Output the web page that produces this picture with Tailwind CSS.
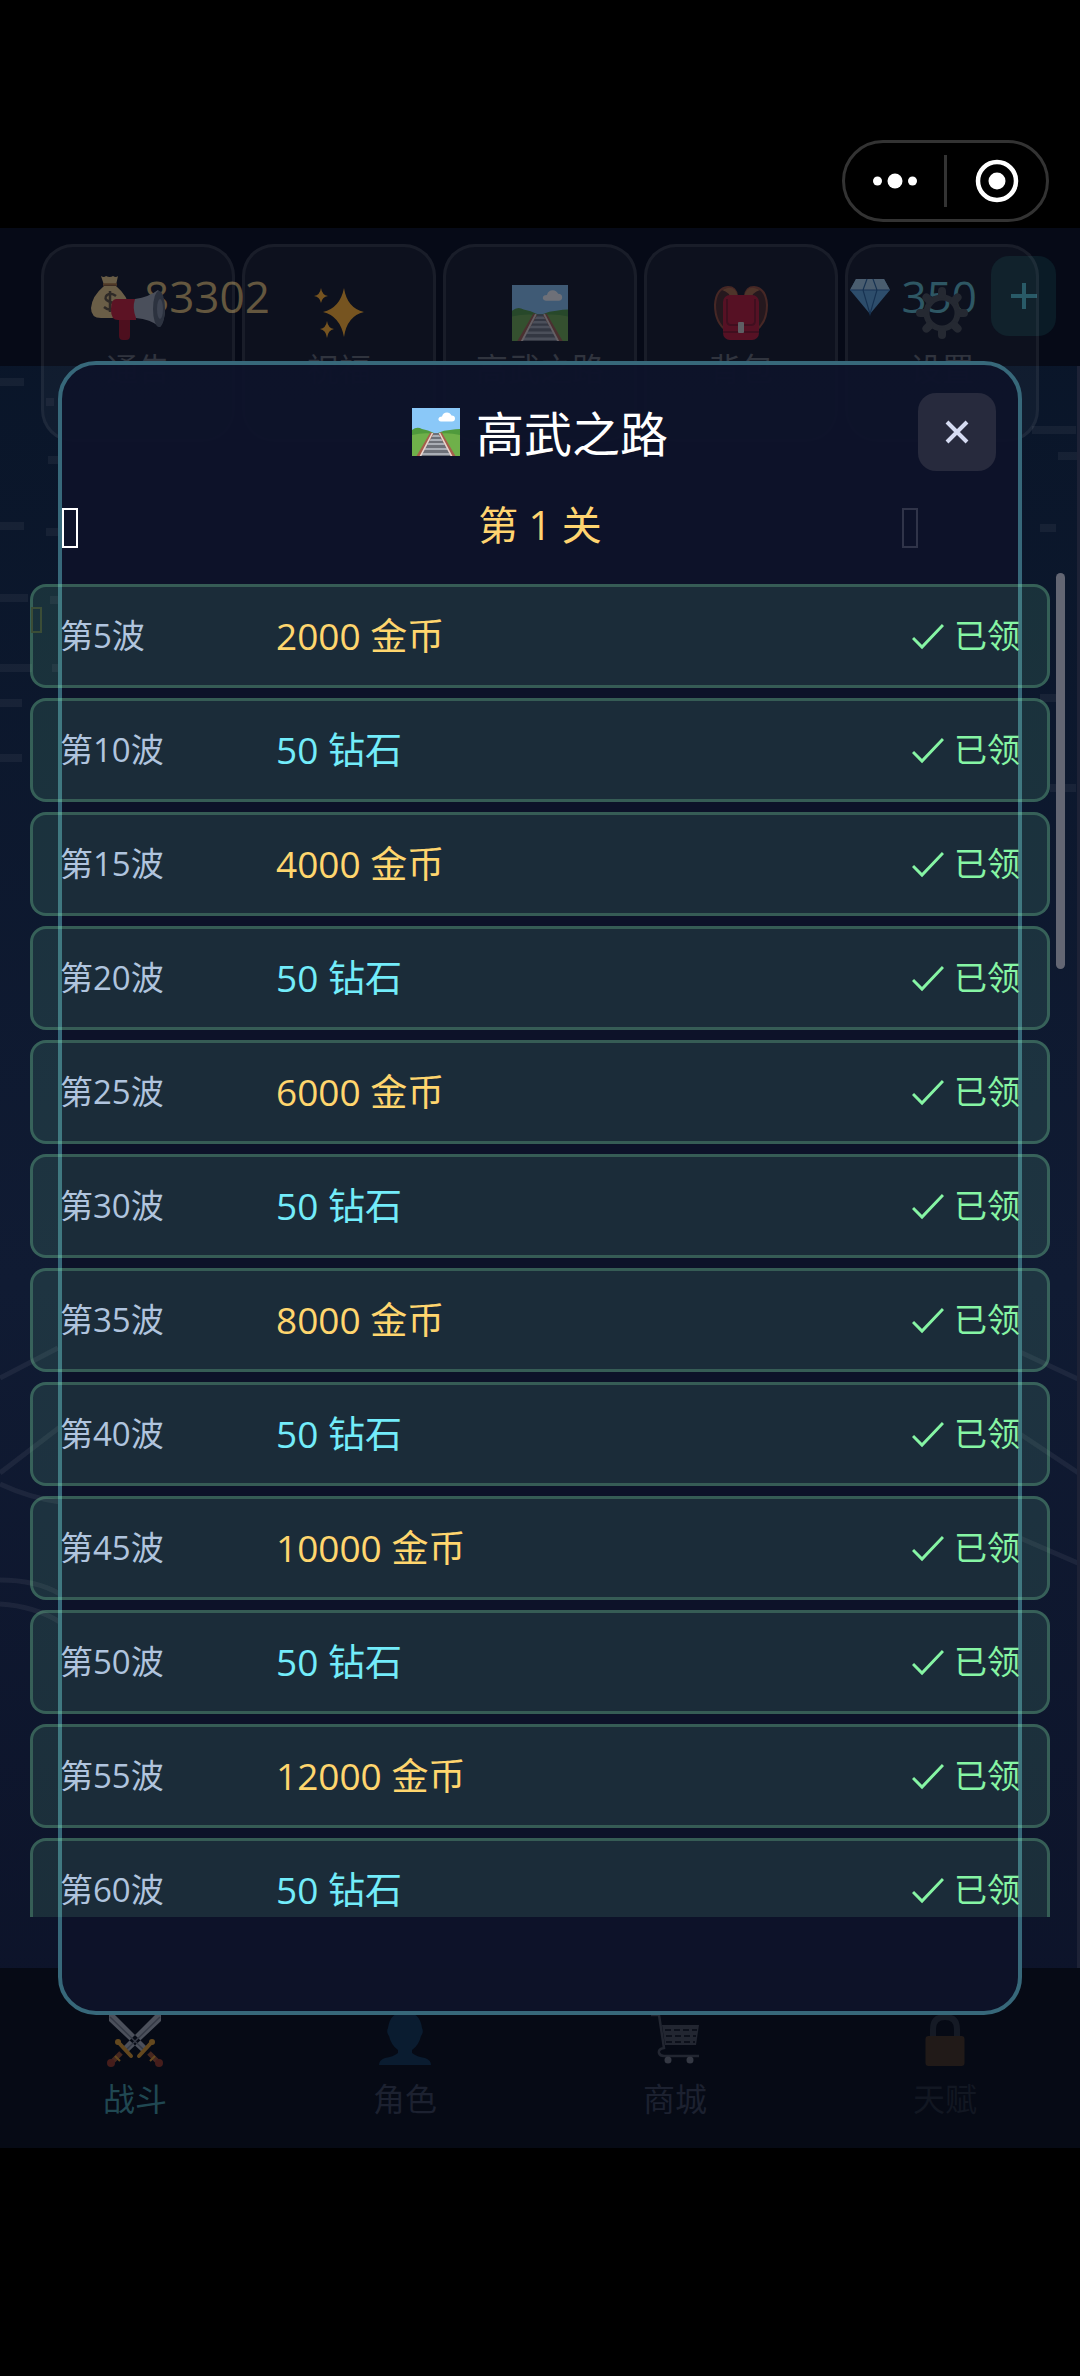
<!DOCTYPE html>
<html lang="zh-CN">
  <head>
    <meta charset="utf-8" />
    <meta name="viewport" content="width=device-width, initial-scale=1" />
    <title>高武之路</title>
    <script src="https://cdn.jsdelivr.net/npm/@tailwindcss/browser@4"></script>
  </head>
  <body class="min-h-screen bg-black font-['Open_Sans','Noto_Sans_CJK_SC',sans-serif]">
    <svg class="hidden">
      <symbol id="track" viewBox="0 0 48 48">
        <clipPath id="track-clip"><rect width="48" height="48" rx="5" /></clipPath>
        <g clip-path="url(#track-clip)">
          <rect width="48" height="48" fill="#8ac8f8" />
          <path d="M0 22q5-4 10-1q6 1 12 4h4q6-3 12-3q6-1 10-1v27H0z" fill="#4f9a3c" />
          <path d="M0 27q12-3 24-1q12-2 24 1v21H0z" fill="#6fb04a" />
          <path d="M19 25h10l14 23H5z" fill="#6d7078" />
          <path d="M18 28h12M17 32h14M15 36h18M12 41h24M9 46h30" stroke="#a9adb5" stroke-width="2.2" />
          <path d="M20 25L6 49M28 25l14 24" stroke="#a65f4b" stroke-width="3.5" />
          <path d="M20.500 25L8 49M27.500 25L40 49" stroke="#e6d6d0" stroke-width="1.600" />
          <path d="M29 13.500q-3-.5-2.500-3q.5-2 3.500-2q1-4 5-4q3 0 4.500 3q3.500 0 3.500 3q0 3-3 3z" fill="#fff" />
        </g>
      </symbol>
    </svg>

    <header class="flex h-[228px] items-end justify-end pr-[31px] pb-1.5">
      <div class="flex h-[82px] w-[207px] items-center rounded-full border-3 border-[#333]">
        <button class="flex flex-1 justify-center" aria-label="更多">
          <svg class="h-4 w-11" viewBox="0 0 44 16" fill="#fff">
            <circle cx="4.500" cy="8" r="4.500" /><circle cx="22" cy="8" r="7.500" /><circle cx="39.500" cy="8" r="4.500" />
          </svg>
        </button>
        <span class="h-[52px] w-[3px] bg-[#333]"></span>
        <button class="flex flex-1 justify-center" aria-label="关闭小程序">
          <svg class="size-11" viewBox="0 0 44 44">
            <circle cx="22" cy="22" r="19" fill="none" stroke="#fff" stroke-width="4.500" />
            <circle cx="22" cy="22" r="8.500" fill="#fff" />
          </svg>
        </button>
      </div>
    </header>

    <main class="relative isolate overflow-hidden bg-linear-to-b from-[#091528] via-[#101b33] via-55% to-[#0c1228] pt-[133px]">
      <!-- dimmed battle scene -->
      <svg class="absolute inset-0 -z-20 size-full" viewBox="0 0 1080 1920" preserveAspectRatio="none" fill="none" stroke="#fff">
        <path d="M0 154h24M46 174h8M48 232h10M0 298h24M46 304h20M0 370h28M50 372h12M0 440h32M52 440h10M0 475h22M0 530h22M1032 202h44M1058 228h20M1040 300h16M1040 470h20M1050 560h26" stroke-opacity=".05" stroke-width="8" />
        <path d="M0 1150l58-30M0 1245l60-46M0 1256q30 14 60 18M0 1352q36 0 60 14M0 1376q34 2 60 18M1020 1124l60 28M1020 1206l60 40M1020 1310l60 26" stroke-opacity=".06" stroke-width="5" />
      </svg>
      <span class="absolute inset-y-0 right-0 -z-20 w-[3px] bg-[#1d2236]"></span>

      <!-- resources and menu, under the dialog -->
      <div class="absolute inset-x-0 top-0 -z-10 h-[138px] bg-[#060a17]">
        <div class="flex items-center justify-between pt-7 pr-6 pl-[88px]">
          <div class="flex items-center gap-3 text-[44px] leading-[80px] text-[#5f5239]">
            <svg class="size-11 opacity-40" viewBox="0 0 44 44">
              <path d="M16 12Q4 22 3 34q0 10 10 10h19q10 0 9-10Q40 22 28 12z" fill="#f5cf82" />
              <path d="M13 2q3 2 5 0q4 2 7 0q3 2 5 0l-2 9H16z" fill="#f5cf82" />
              <path d="M15 10.500h14" stroke="#b0722f" stroke-width="2.500" />
              <path d="M28 22q-5-4-9-1q-4 4 2 6.500q8 2 5 6.500q-4 4-10-1M22 17v21" fill="none" stroke="#5c4b32" stroke-width="2.500" />
            </svg>
            <span>83302</span>
          </div>
          <div class="flex items-center text-[44px] leading-[80px] text-[#28525f]">
            <svg class="mr-3 size-10 opacity-40" viewBox="0 0 40 40">
              <path d="M6 3h28l6 11l-20 24L0 14z" fill="#5aa5e0" />
              <path d="M6 3h28l6 11H0z" fill="#a4cdea" />
              <path d="M0 14h40M13 14l7 24l7-24l-4-11M13 14l4-11" fill="none" stroke="#1e5f9c" stroke-width="1.200" />
            </svg>
            <span>350</span>
            <button class="ml-3.5 flex h-20 w-[65px] items-center justify-center rounded-[18px] bg-[#0a1b26]" aria-label="增加钻石">
              <svg class="size-7" viewBox="0 0 28 28"><path d="M14 1v26M1 14h26" stroke="#235563" stroke-width="4" /></svg>
            </button>
          </div>
        </div>
      </div>
      <nav class="absolute inset-x-0 top-4 -z-10 grid grid-cols-5 gap-[7px] px-[41px] text-[32px] leading-10 text-[#30343e]">
        <a href="#" class="flex h-[198px] flex-col items-center rounded-[32px] border-3 border-white/5 bg-white/3 pt-[38px]">
          <svg class="size-14" viewBox="0 0 56 56">
            <path d="M9 31h11v20q0 4-4 4h-3q-4 0-4-4z" fill="#4d0f1e" />
            <path d="M6 14h20v21H8q-7 0-7-10q0-11 5-11z" fill="#5c1324" />
            <path d="M25 14Q39 12 48 5q7 8 7 19t-5 18q-10-8-24-9q-4-10-1-19z" fill="#4a4f5b" />
            <ellipse cx="49" cy="24" rx="6" ry="18" fill="#2c323f" />
            <ellipse cx="50" cy="24" rx="3" ry="10" fill="#3d4351" />
          </svg>
          <span class="mt-2">通告</span>
        </a>
        <a href="#" class="flex h-[198px] flex-col items-center rounded-[32px] border-3 border-white/5 bg-white/3 pt-[38px]">
          <svg class="size-14 opacity-45" viewBox="0 0 56 56" fill="#f5a623">
            <path d="M33 3Q36 23 53 27Q36 31 33 52Q29 31 12 27Q29 23 33 3z" />
            <path d="M10 3q1 7 7 8q-6 1-7 7q-1-6-7-7q6-1 7-8zM16 36q1 7 7 8q-6 1-7 9q-1-8-7-9q6-1 7-8z" />
          </svg>
          <span class="mt-2">祝福</span>
        </a>
        <a href="#" class="flex h-[198px] flex-col items-center rounded-[32px] border-3 border-white/5 bg-white/3 pt-[38px]">
          <svg class="size-14 opacity-40"><use href="#track" /></svg>
          <span class="mt-2">高武之路</span>
        </a>
        <a href="#" class="flex h-[198px] flex-col items-center rounded-[32px] border-3 border-white/5 bg-white/3 pt-[38px]">
          <svg class="size-14 opacity-40" viewBox="0 0 56 56">
            <path d="M14 46Q2 38 2 20Q3 3 15 2q8 0 9 9M42 46q12-8 12-26Q53 3 41 2q-8 0-9 9" fill="#4a2420" stroke="#9c4a30" stroke-width="2" />
            <path d="M9 5q13-7 16 7l-7 3q-1-8-9-10zM47 5Q34-2 31 12l7 3q1-8 9-10z" fill="#b0683c" />
            <rect x="10" y="10" width="36" height="45" rx="7" fill="#c4122f" />
            <path d="M14 14v22q0 4 4 4h20q4 0 4-4V14M10 47h36" fill="none" stroke="#8d0d22" stroke-width="2" />
            <rect x="25" y="37" width="6" height="11" rx="1" fill="#d8d4cc" />
          </svg>
          <span class="mt-2">背包</span>
        </a>
        <a href="#" class="flex h-[198px] flex-col items-center rounded-[32px] border-3 border-white/5 bg-white/3 pt-[38px]">
          <svg class="size-14" viewBox="0 0 56 56" fill="none" stroke="#252932">
            <circle cx="28" cy="28" r="15.500" stroke-width="6" />
            <path stroke-width="8" stroke-linecap="round" d="M28 6v4M28 46v4M6 28h4M46 28h4M12.400 12.400l3 3M40.600 40.600l3 3M12.400 43.600l3-3M40.600 15.400l3-3" />
          </svg>
          <span class="mt-2">设置</span>
        </a>
      </nav>

      <section class="mx-[58px] rounded-[38px] border-4 border-[#37687a] bg-[#0d1329]/97 pt-7 pb-[94px]">
        <div class="relative flex h-[78px] items-center justify-center gap-4">
          <svg class="size-12"><use href="#track" /></svg>
          <h1 class="pt-1 text-[48px] leading-[72px] text-white">高武之路</h1>
          <button class="absolute right-[22px] flex size-[78px] items-center justify-center rounded-[18px] bg-[#272a3d]" aria-label="关闭">
            <svg class="size-6" viewBox="0 0 24 24"><path d="M2 2l20 20M22 2L2 22" stroke="#d5dbf2" stroke-width="4" /></svg>
          </button>
        </div>

        <div class="flex h-[113px] items-center justify-between pr-[100px]">
          <button class="h-10 w-4 border-2 border-white" aria-label="上一关"></button>
          <h2 class="pb-1.5 pl-[100px] text-[40px] leading-[60px] text-[#ffd470]">第 1 关</h2>
          <button class="h-10 w-4 border-2 border-[#303449]" aria-label="下一关"></button>
        </div>

        <div class="relative -mx-8">
          <span class="absolute top-[23px] left-px h-[26px] w-[11px] border-2 border-[#3b4d36]"></span>
          <ul id="rewards" class="flex max-h-[1333px] flex-col gap-2.5 overflow-hidden"></ul>
        </div>
      </section>
      <span class="absolute top-[345px] right-[15px] h-[396px] w-[9px] rounded-full bg-[#636673]"></span>

      <nav class="relative -z-10 -mt-[47px] grid h-[180px] grid-cols-4 bg-[#060a15] pt-[43px] text-center text-[32px] leading-[52px]">
        <a href="#" class="flex flex-col items-center gap-1.5 text-[#204852]">
          <svg class="size-14 opacity-40" viewBox="0 0 56 56">
            <path d="M2 4h6l33 33l-5 5L2 10zM54 4h-6L15 37l5 5L54 10z" fill="#b4b9c4" />
            <path d="M3 6l35 34M53 6L18 40" stroke="#7b818e" stroke-width="1.500" />
            <path d="M12 32l12 13M44 32L32 45" stroke="#f0a52d" stroke-width="4" stroke-linecap="round" />
            <path d="M14 42l-9 9M42 42l9 9" stroke="#a8552f" stroke-width="5" />
            <circle cx="4" cy="52" r="4" fill="#a33a26" /><circle cx="52" cy="52" r="4" fill="#a33a26" />
            <circle cx="11" cy="31" r="3" fill="#f0a52d" /><circle cx="45" cy="31" r="3" fill="#f0a52d" />
            <path d="M8 45l5 5M48 45l-5 5" stroke="#f0a52d" stroke-width="2" />
          </svg>
          <span>战斗</span>
        </a>
        <a href="#" class="flex flex-col items-center gap-1.5 text-[#1c2130]">
          <svg class="size-14" viewBox="0 0 56 56" fill="#0a1c30">
            <path d="M28 1q15 0 17 16q2 4-1 8q-2 9-9 14v3q5 4 13 5q6 2 6 7H2q0-5 6-7q8-1 13-5v-3q-7-5-9-14q-3-4-1-8Q13 1 28 1z" />
          </svg>
          <span>角色</span>
        </a>
        <a href="#" class="flex flex-col items-center gap-1.5 text-[#1c2130]">
          <svg class="size-14" viewBox="0 0 56 56" fill="none" stroke="#222631">
            <path stroke-width="2.500" d="M4 4h8l5 33q-6 1-5 5q1 3 5 3h35" />
            <path fill="#222631" stroke="none" d="M15 14h37l-3 20H18z" />
            <path stroke="#0c101b" stroke-width="2" stroke-dasharray="6 3" d="M18 19h32M19 25h30M19 31h29" />
            <g fill="#343843" stroke="none"><circle cx="21" cy="49" r="3.500" /><circle cx="43" cy="49" r="3.500" /></g>
          </svg>
          <span>商城</span>
        </a>
        <a href="#" class="flex flex-col items-center gap-1.5 text-[#121722]">
          <svg class="size-14" viewBox="0 0 56 56">
            <path d="M16 28V18q0-12 12-12t12 12v10" fill="none" stroke="#151a25" stroke-width="6" />
            <rect x="8.500" y="25" width="39" height="30" rx="3" fill="#211a18" />
          </svg>
          <span>天赋</span>
        </a>
      </nav>
    </main>

    <script>
      // every 10th wave pays diamonds, the ones between pay coins
      const rewards = [];
      for (let wave = 5; wave <= 60; wave += 5) {
        const gem = wave % 10 === 0;
        rewards.push({
          wave,
          text: gem ? "50 钻石" : (wave + 5) * 200 + " 金币",
          color: gem ? "text-[#73ecfa]" : "text-[#ffd66e]",
        });
      }

      document.getElementById("rewards").innerHTML = rewards
        .map(
          (r) => `
          <li class="flex h-[104px] shrink-0 items-center rounded-2xl border-3 border-[#86efac]/25 bg-[#86efac]/12 px-[27px]">
            <span class="w-[216px] text-[33px] text-[#b0c4de]">第${r.wave}波</span>
            <span class="text-[37px] ${r.color}">${r.text}</span>
            <span class="ml-auto flex items-center gap-2.5 text-[33px] text-[#86f5a4]">
              <svg class="h-7 w-8" viewBox="0 0 32 28"><path d="M1 16l9 9L31 3" fill="none" stroke="#86f5a4" stroke-width="3" /></svg>
              已领
            </span>
          </li>`
        )
        .join("");
    </script>
  </body>
</html>
